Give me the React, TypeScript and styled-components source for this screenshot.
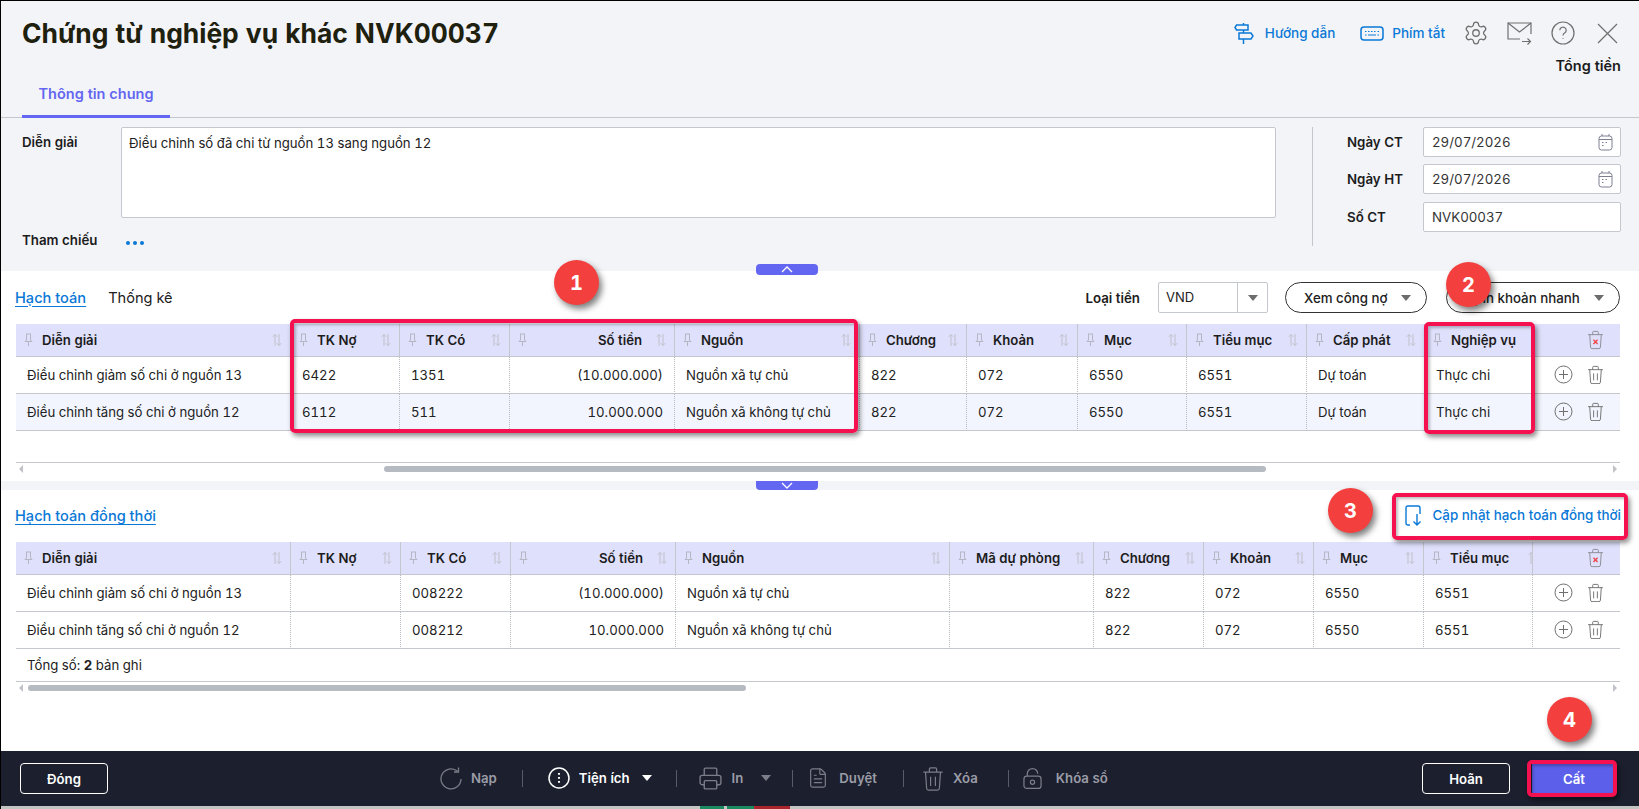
import * as React from 'react'
import styled, { createGlobalStyle } from 'styled-components'
import { Settings, Printer, FileText } from 'lucide-react'

const GlobalStyle = createGlobalStyle`
  html, body {
    margin: 0;
    padding: 0;
    width: 1639px;
    height: 809px;
    overflow: hidden;
    background: #fff;
    font-family: Inter, "Noto Sans", "Liberation Sans", sans-serif;
    font-size: 13px;
    font-variant-numeric: tabular-nums;
    color: #212121;
  }
  * { box-sizing: border-box; }
`

const BLUE = '#0a78d6'
const LINE = '#c5c7cf'

const Page = styled.div`
  position: relative;
  width: 1639px;
  height: 809px;
  overflow: hidden;
`

const Frame = styled.div`
  display: flex;
  flex-direction: column;
  height: 100%;
  border-top: 1px solid #000;
  border-left: 1px solid #000;
`

const Header = styled.header`
  height: 270px;
  flex: none;
  background: #f3f4f8;
`

const HeadTop = styled.div`
  display: flex;
  justify-content: space-between;
  height: 117px;
  padding: 0 18px 0 21px;
  border-bottom: 1px solid ${LINE};
`

const HeadLeft = styled.div`
  display: flex;
  flex-direction: column;
  justify-content: space-between;
`

const Title = styled.h1`
  margin: 14px 0 0;
  font-size: 26.4px;
  line-height: 36px;
  font-weight: 700;
  color: #20200f;
`

const Tab = styled.div`
  width: 148px;
  height: 47px;
  margin-bottom: -1px;
  padding-top: 13px;
  text-align: center;
  font-size: 14.5px;
  line-height: 20px;
  font-weight: 600;
  color: #6366f1;
  border-bottom: 3px solid #6366f1;
`

const HeadRight = styled.div`
  display: flex;
  flex-direction: column;
  align-items: flex-end;
`

const Tools = styled.div`
  display: flex;
  align-items: center;
  height: 40px;
  margin-top: 12px;
`

const ToolLink = styled.a<{ $gap: number; $after: number }>`
  display: flex;
  align-items: center;
  gap: ${p => p.$gap}px;
  margin-right: ${p => p.$after}px;
  color: ${BLUE};
  font-size: 13.5px;
  font-weight: 500;
`

const ToolIcon = styled.span<{ $after: number }>`
  display: flex;
  margin-right: ${p => p.$after}px;
  color: #6f6f6f;
`

const TotalLabel = styled.div`
  margin-top: 3px;
  font-size: 14.5px;
  line-height: 20px;
  font-weight: 600;
  color: #1c1c1c;
`

const FormArea = styled.div`
  display: flex;
  padding: 9px 18px 0 21px;
`

const FormLeft = styled.div`
  width: 1254px;
`

const FormRow = styled.div<{ $top?: number }>`
  display: flex;
  align-items: flex-start;
  margin-top: ${p => p.$top ?? 0}px;
`

const FieldLabel = styled.label<{ $width: number }>`
  flex: none;
  width: ${p => p.$width}px;
  font-size: 13.3px;
  line-height: 30px;
  font-weight: 600;
  color: #1c1c1c;
`

const TextBox = styled.div`
  flex: 1;
  height: 91px;
  padding: 5px 7px;
  background: #fff;
  border: 1px solid ${LINE};
  border-radius: 2px;
  font-size: 13.2px;
  line-height: 20px;
`

const Dots = styled.span`
  display: flex;
  gap: 3px;
  margin: 16px 0 0 5px;
`

const Dot = styled.i`
  width: 4px;
  height: 4px;
  border-radius: 50%;
  background: ${BLUE};
`

const VDivider = styled.div`
  width: 1px;
  height: 119px;
  margin: 0 34px 0 36px;
  background: ${LINE};
`

const FormRight = styled.div`
  display: flex;
  flex-direction: column;
  gap: 7px;
`

const InputBox = styled.div`
  display: flex;
  align-items: center;
  justify-content: space-between;
  width: 198px;
  height: 30px;
  padding: 0 7px 0 8px;
  background: #fff;
  border: 1px solid ${LINE};
  border-radius: 2px;
  font-size: 13.3px;
  color: #333;
`

const Section = styled.section<{ $height: number }>`
  position: relative;
  flex: none;
  height: ${p => p.$height}px;
  padding: 0 19px 0 15px;
`

const Toolbar = styled.div<{ $height: number }>`
  display: flex;
  align-items: center;
  justify-content: space-between;
  height: ${p => p.$height}px;
  margin-left: -1px;
`

const SubTabs = styled.div`
  display: flex;
  gap: 22px;
`

const SubTab = styled.a<{ $active?: boolean }>`
  font-size: 14.6px;
  font-weight: ${p => (p.$active ? 500 : 400)};
  color: ${p => (p.$active ? BLUE : '#212121')};
  text-decoration: ${p => (p.$active ? 'underline' : 'none')};
  text-underline-offset: 3px;
`

const ToolbarRight = styled.div`
  display: flex;
  align-items: center;
`

const SelectLabel = styled.span`
  margin-right: 18px;
  font-size: 13.3px;
  font-weight: 600;
  color: #1c1c1c;
`

const SelectBox = styled.div`
  display: flex;
  width: 110px;
  height: 31px;
  margin-right: 17px;
  border: 1px solid ${LINE};
  border-radius: 2px;
  line-height: 29px;
`

const SelectValue = styled.span`
  flex: 1;
  padding-left: 7px;
`

const SelectArrow = styled.span`
  display: flex;
  align-items: center;
  justify-content: center;
  width: 30px;
  border-left: 1px solid ${LINE};
`

const Caret = styled.i<{ $color?: string; $left?: number }>`
  display: block;
  width: 0;
  height: 0;
  margin-left: ${p => p.$left ?? 0}px;
  border-left: 5px solid transparent;
  border-right: 5px solid transparent;
  border-top: 6px solid ${p => p.$color ?? '#6c6c6c'};
`

const Pill = styled.button<{ $width: number; $after?: number }>`
  display: flex;
  align-items: center;
  justify-content: space-between;
  width: ${p => p.$width}px;
  height: 31px;
  margin-right: ${p => p.$after ?? 0}px;
  padding: 0 15px 0 18px;
  background: #fff;
  border: 1px solid #333;
  border-radius: 16px;
  font: 500 13.3px Inter, sans-serif;
  color: #212121;
`

const GridTable = styled.table`
  width: 1604px;
  table-layout: fixed;
  border-collapse: separate;
  border-spacing: 0;
`

const HeadCell = styled.th`
  height: 33px;
  padding: 0;
  background: #dfe0fb;
  border-bottom: 1px solid ${LINE};
  border-right: 1px solid ${LINE};
  font-size: 13.2px;
  font-weight: 600;
  color: #1c1c1c;
  overflow: hidden;
  &:last-child { border-right: 0; }
`

const HeadInner = styled.div<{ $right?: boolean; $tight?: boolean }>`
  display: flex;
  align-items: center;
  padding: 0 ${p => (p.$tight ? 0 : 8)}px 0 8px;
  text-align: ${p => (p.$right ? 'right' : 'left')};
`

const HeadText = styled.span<{ $right?: boolean }>`
  flex: 1;
  margin: 0 ${p => (p.$right ? 14 : 0)}px 0 9px;
  white-space: nowrap;
`

const BodyRow = styled.tr<{ $alt?: boolean }>`
  background: ${p => (p.$alt ? '#f2f5fe' : '#fff')};
`

const BodyCell = styled.td<{ $right?: boolean; $rowHeight: number }>`
  height: ${p => p.$rowHeight}px;
  padding: 0 11px 1px;
  border-bottom: 1px solid ${LINE};
  border-right: 1px dotted #b8bac2;
  font-size: 13.2px;
  text-align: ${p => (p.$right ? 'right' : 'left')};
  white-space: nowrap;
  &:last-child { border-right: 0; }
`

const ActionGroup = styled.div`
  display: flex;
  align-items: center;
  justify-content: flex-end;
  gap: 14px;
  color: #6f6f6f;
  margin-right: 5px;
`

const HeadAction = styled.div`
  display: flex;
  justify-content: flex-end;
  padding-right: 16px;
`

const TableSlot = styled.div<{ $height: number }>`
  height: ${p => p.$height}px;
`

const ScrollTrack = styled.div`
  display: flex;
  align-items: center;
  width: 1604px;
  height: 11px;
  border-top: 1px solid ${LINE};
  padding: 2px 3px 0;
`

const Thumb = styled.div<{ $left: number; $width: number }>`
  width: ${p => p.$width}px;
  height: 6px;
  margin-left: ${p => p.$left}px;
  background: #b6bac1;
  border-radius: 3px;
`

const ArrowLeft = styled.i`
  width: 0;
  height: 0;
  border-top: 4px solid transparent;
  border-bottom: 4px solid transparent;
  border-right: 4px solid #c0c2c8;
`

const ArrowRight = styled.i`
  width: 0;
  height: 0;
  margin-left: auto;
  border-top: 4px solid transparent;
  border-bottom: 4px solid transparent;
  border-left: 4px solid #c0c2c8;
`

const Splitter = styled.div`
  flex: none;
  height: 9px;
  background: #f3f4f8;
`

const SplitHandle = styled.span<{ $top: number; $up?: boolean }>`
  position: absolute;
  left: 756px;
  top: ${p => p.$top}px;
  display: flex;
  align-items: center;
  justify-content: center;
  width: 62px;
  height: ${p => (p.$up ? 11 : 9)}px;
  background: #6366f1;
  border-radius: ${p => (p.$up ? '4px' : '0 0 4px 4px')};
  color: #fff;
`

const RowCount = styled.div`
  height: 32px;
  padding-left: 11px;
  line-height: 32px;
  font-size: 13.2px;
`

const UpdateLink = styled.a`
  display: flex;
  align-items: center;
  gap: 11px;
  margin: -2px -1px 0 0;
  color: ${BLUE};
  font-size: 13.4px;
  font-weight: 500;
`

const Spacer = styled.div`
  flex: 1;
`

const ActionBar = styled.footer`
  flex: none;
  display: flex;
  align-items: center;
  height: 55px;
  padding: 0 23px 0 19px;
  background: #1c1f2e;
`

const OutlineButton = styled.button<{ $width: number; $after?: number }>`
  width: ${p => p.$width}px;
  height: 31px;
  margin-right: ${p => p.$after ?? 0}px;
  background: transparent;
  border: 1px solid #fff;
  border-radius: 4px;
  font: 600 13.2px Inter, sans-serif;
  color: #fff;
`

const PrimaryButton = styled.button`
  width: 84px;
  height: 31px;
  background: #5b5fe9;
  border: 0;
  border-radius: 2px;
  font: 600 13.2px Inter, sans-serif;
  color: #fff;
`

const BarCenter = styled.div`
  display: flex;
  align-items: center;
  margin-left: 332px;
  margin-right: auto;
`

const BarItem = styled.span<{ $on?: boolean; $gap?: number }>`
  display: flex;
  align-items: center;
  gap: ${p => p.$gap ?? 9}px;
  font-size: 13.2px;
  font-weight: 600;
  color: ${p => (p.$on ? '#fff' : '#9a9ca6')};
`

const BarSep = styled.i<{ $left: number; $right: number }>`
  width: 1px;
  height: 17px;
  margin: 0 ${p => p.$right}px 0 ${p => p.$left}px;
  background: #585b68;
`

const TaskStrip = styled.div`
  flex: none;
  display: flex;
  height: 3px;
  background: #c4c4c4;
  padding-left: 699px;
`

const TaskMark = styled.i<{ $color: string; $width: number; $after?: number }>`
  width: ${p => p.$width}px;
  margin-right: ${p => p.$after ?? 0}px;
  background: ${p => p.$color};
`

const RedBox = styled.div<{ $x: number; $y: number; $w: number; $h: number }>`
  position: absolute;
  left: ${p => p.$x}px;
  top: ${p => p.$y}px;
  width: ${p => p.$w}px;
  height: ${p => p.$h}px;
  border: 4px solid #f5104f;
  border-radius: 5px;
  box-shadow: 2px 3px 5px rgba(0, 0, 0, 0.45), inset 2px 2px 3px rgba(0, 0, 0, 0.25);
  pointer-events: none;
`

const Badge = styled.div<{ $x: number; $y: number }>`
  position: absolute;
  left: ${p => p.$x}px;
  top: ${p => p.$y}px;
  display: flex;
  align-items: center;
  justify-content: center;
  width: 45px;
  height: 45px;
  border-radius: 50%;
  background: #f43f3f;
  box-shadow: 3px 4px 6px rgba(0, 0, 0, 0.5);
  font-size: 20px;
  font-weight: 700;
  color: #fff;
`

const PinIcon = () => (
  <svg width="9" height="14" viewBox="0 0 9 14" fill="none" stroke="#b4b6c4" strokeWidth="1">
    <path d="M2 1h5M2.5 1v6L1 8.5h7L6.5 7V1M4.5 8.5V13" />
  </svg>
)

const SortIcon = ({ off }: { off?: boolean }) => (
  <svg width="10" height="14" viewBox="0 0 10 14" fill="none" stroke="#bfc1cb" strokeWidth="1" style={off ? { marginRight: -6 } : undefined}>
    <path d="M3 13V1.5M.8 3.8 3 1.5l2.2 2.3M7 1v11.5M4.8 10.2 7 12.5l2.2-2.3" />
  </svg>
)

const CalendarIcon = () => (
  <svg width="15" height="18" viewBox="0 0 15 18" fill="none" stroke="#7c7f90" strokeWidth="1">
    <rect x="1" y="3" width="13" height="14" rx="2.5" />
    <path d="M1 6.5h13M4 1v2M11 1v2" />
    <path d="M4 9.5h1.5M7.5 9.5H9M4 12.5h1.5" />
  </svg>
)

const PlusIcon = () => (
  <svg width="19" height="19" viewBox="0 0 19 19" fill="none" stroke="#6f6f6f" strokeWidth="1">
    <circle cx="9.5" cy="9.5" r="8.5" />
    <path d="M9.5 5v9M5 9.5h9" />
  </svg>
)

const TrashIcon = ({ mark, size = 18, color = '#6f6f6f' }: { mark?: boolean; size?: number; color?: string }) => (
  <svg width={size} height={size * 1.15} viewBox="0 0 18 21" fill="none" stroke={color} strokeWidth="1">
    <path d="M1 5h16M6 5V2.5Q6 1.500 7 1.500h4q1 0 1 1V5M2.800 5l.9 13.500q.1 1.500 1.600 1.500h7.400q1.500 0 1.600-1.500L15.200 5" />
    {mark ? <path d="M6.800 10.500l4.400 4.500M11.200 10.500l-4.400 4.500" stroke="#ef4444" strokeWidth="1.400" /> : <path d="M7 9v7.500M11 9v7.500" />}
  </svg>
)

const SignpostIcon = () => (
  <svg width="20" height="23" viewBox="0 0 20 23" fill="none" stroke={BLUE} strokeWidth="1.500">
    <path d="M9.500 1v2M9.500 8v3M9.500 17v5" />
    <path d="M2.500 3H14v5H2.500L1 5.500z" />
    <path d="M5 11h12l2 3-2 3H5z" />
  </svg>
)

const KeyboardIcon = () => (
  <svg width="24" height="15" viewBox="0 0 24 15" fill="none" stroke={BLUE} strokeWidth="1.500">
    <rect x="1" y="1" width="22" height="13" rx="3" />
    <path d="M5 5.500h1.500M8 5.500h1.500M11 5.500h1.500M14 5.500h1.500M17.500 5.500H19M5 9h1.500M8 9h8M17.500 9H19" strokeWidth="1.200" />
  </svg>
)

const MailIcon = () => (
  <svg width="25" height="23" viewBox="0 0 25 23" fill="none" stroke="#6f6f6f" strokeWidth="1.200">
    <path d="M13 17H1V1h23v11" />
    <path d="M1 1l11.500 9L24 1" />
    <path d="M15 19.500h8.500M20.500 16.500l3 3-3 3" />
  </svg>
)

const HelpIcon = () => (
  <svg width="24" height="24" viewBox="0 0 24 24" fill="none" stroke="#6f6f6f" strokeWidth="1.200">
    <circle cx="12" cy="12" r="11" />
    <path d="M8.800 9.300a3.200 3.200 0 1 1 4.800 2.800c-1 .6-1.600 1.200-1.600 2.400" />
    <path d="M12 17.200v.8" />
  </svg>
)

const CloseIcon = () => (
  <svg width="21" height="21" viewBox="0 0 21 21" fill="none" stroke="#6f6f6f" strokeWidth="1.200">
    <path d="M1 1l19 19M20 1 1 20" />
  </svg>
)

const UpdateIcon = () => (
  <svg width="17" height="21" viewBox="0 0 17 21" fill="none" stroke={BLUE} strokeWidth="1.400">
    <path d="M5 20H3q-2 0-2-2V3q0-2 2-2h10q2 0 2 2v6" />
    <path d="M12 9v11M8.500 16.500 12 20l3.500-3.500" />
  </svg>
)

const ReloadIcon = () => (
  <svg width="22" height="23" viewBox="0 0 22 23" fill="none" stroke="#7b7d88" strokeWidth="1.300">
    <path d="M17.500 4.300A10 10 0 1 0 21 12" />
    <path d="M18.500 .5v4.500H14" />
  </svg>
)

const MoreIcon = () => (
  <svg width="22" height="22" viewBox="0 0 22 22" fill="none" stroke="#fff" strokeWidth="1.500">
    <circle cx="11" cy="11" r="10" />
    <path d="M11 6v1.800M11 10v1.800M11 14v1.800" strokeWidth="2" />
  </svg>
)

const LockIcon = () => (
  <svg width="19" height="23" viewBox="0 0 20 23" fill="none" stroke="#7b7d88" strokeWidth="1.300">
    <path d="M4.500 9V6.500a5.500 5.500 0 0 1 11 0" />
    <rect x="1" y="9" width="18" height="13" rx="3" />
    <circle cx="10" cy="15.500" r="2.200" />
  </svg>
)

const Chevron = ({ up }: { up?: boolean }) => (
  <svg width="12" height="7" viewBox="0 0 12 7" fill="none" stroke="#fff" strokeWidth="1.300">
    <path d={up ? 'M1 6l5-5 5 5' : 'M1 1l5 5 5-5'} />
  </svg>
)

type Column = { label: string; width: number; right?: boolean; noSort?: boolean; sortOff?: boolean }

const mainColumns: Column[] = [
  { label: 'Diễn giải', width: 275 },
  { label: 'TK Nợ', width: 109 },
  { label: 'TK Có', width: 110 },
  { label: 'Số tiền', width: 165, right: true },
  { label: 'Nguồn', width: 185 },
  { label: 'Chương', width: 107 },
  { label: 'Khoản', width: 111 },
  { label: 'Mục', width: 109 },
  { label: 'Tiểu mục', width: 120 },
  { label: 'Cấp phát', width: 118 },
  { label: 'Nghiệp vụ', width: 108, noSort: true },
]

const mainRows = [
  ['Điều chỉnh giảm số chi ở nguồn 13', '6422', '1351', '(10.000.000)', 'Nguồn xã tự chủ', '822', '072', '6550', '6551', 'Dự toán', 'Thực chi'],
  ['Điều chỉnh tăng số chi ở nguồn 12', '6112', '511', '10.000.000', 'Nguồn xã không tự chủ', '822', '072', '6550', '6551', 'Dự toán', 'Thực chi'],
]

const syncColumns: Column[] = [
  { label: 'Diễn giải', width: 275 },
  { label: 'TK Nợ', width: 110 },
  { label: 'TK Có', width: 110 },
  { label: 'Số tiền', width: 165, right: true },
  { label: 'Nguồn', width: 274 },
  { label: 'Mã dự phòng', width: 144 },
  { label: 'Chương', width: 110 },
  { label: 'Khoản', width: 110 },
  { label: 'Mục', width: 110 },
  { label: 'Tiểu mục', width: 109, sortOff: true },
]

const syncRows = [
  ['Điều chỉnh giảm số chi ở nguồn 13', '', '008222', '(10.000.000)', 'Nguồn xã tự chủ', '', '822', '072', '6550', '6551'],
  ['Điều chỉnh tăng số chi ở nguồn 12', '', '008212', '10.000.000', 'Nguồn xã không tự chủ', '', '822', '072', '6550', '6551'],
]

const DataTable = ({ columns, rows, stripe, rowHeight }: { columns: Column[]; rows: string[][]; stripe?: boolean; rowHeight: number }) => (
  <GridTable>
    <colgroup>
      {columns.map(c => <col key={c.label} width={c.width} />)}
      <col width={87} />
    </colgroup>
    <thead>
      <tr>
        {columns.map(c => (
          <HeadCell key={c.label}>
            <HeadInner $right={c.right} $tight={c.sortOff}>
              <PinIcon />
              <HeadText $right={c.right}>{c.label}</HeadText>
              {!c.noSort && <SortIcon off={c.sortOff} />}
            </HeadInner>
          </HeadCell>
        ))}
        <HeadCell>
          <HeadAction><TrashIcon mark size={17} color="#8a8a95" /></HeadAction>
        </HeadCell>
      </tr>
    </thead>
    <tbody>
      {rows.map((row, i) => (
        <BodyRow key={i} $alt={stripe && i === 1}>
          {row.map((value, j) => (
            <BodyCell key={j} $rowHeight={rowHeight} $right={columns[j].right}>{value}</BodyCell>
          ))}
          <BodyCell $rowHeight={rowHeight}>
            <ActionGroup><PlusIcon /><TrashIcon size={17} /></ActionGroup>
          </BodyCell>
        </BodyRow>
      ))}
    </tbody>
  </GridTable>
)

export default function App() {
  return (
    <Page>
      <GlobalStyle />
      <Frame>
        <Header>
          <HeadTop>
            <HeadLeft>
              <Title>Chứng từ nghiệp vụ khác NVK00037</Title>
              <Tab>Thông tin chung</Tab>
            </HeadLeft>
            <HeadRight>
              <Tools>
                <ToolLink $gap={11} $after={25}><SignpostIcon />Hướng dẫn</ToolLink>
                <ToolLink $gap={8} $after={18}><KeyboardIcon />Phím tắt</ToolLink>
                <ToolIcon $after={18}><Settings size={26} strokeWidth={1.2} /></ToolIcon>
                <ToolIcon $after={19}><MailIcon /></ToolIcon>
                <ToolIcon $after={22}><HelpIcon /></ToolIcon>
                <ToolIcon $after={3}><CloseIcon /></ToolIcon>
              </Tools>
              <TotalLabel>Tổng tiền</TotalLabel>
            </HeadRight>
          </HeadTop>
          <FormArea>
            <FormLeft>
              <FormRow>
                <FieldLabel $width={99}>Diễn giải</FieldLabel>
                <TextBox>Điều chỉnh số đã chi từ nguồn 13 sang nguồn 12</TextBox>
              </FormRow>
              <FormRow $top={7}>
                <FieldLabel $width={99}>Tham chiếu</FieldLabel>
                <Dots><Dot /><Dot /><Dot /></Dots>
              </FormRow>
            </FormLeft>
            <VDivider />
            <FormRight>
              <FormRow>
                <FieldLabel $width={76}>Ngày CT</FieldLabel>
                <InputBox>29/07/2026<CalendarIcon /></InputBox>
              </FormRow>
              <FormRow>
                <FieldLabel $width={76}>Ngày HT</FieldLabel>
                <InputBox>29/07/2026<CalendarIcon /></InputBox>
              </FormRow>
              <FormRow $top={1}>
                <FieldLabel $width={76}>Số CT</FieldLabel>
                <InputBox>NVK00037</InputBox>
              </FormRow>
            </FormRight>
          </FormArea>
        </Header>

        <Section $height={210}>
          <Toolbar $height={53}>
            <SubTabs>
              <SubTab $active>Hạch toán</SubTab>
              <SubTab>Thống kê</SubTab>
            </SubTabs>
            <ToolbarRight>
              <SelectLabel>Loại tiền</SelectLabel>
              <SelectBox>
                <SelectValue>VND</SelectValue>
                <SelectArrow><Caret /></SelectArrow>
              </SelectBox>
              <Pill $width={142} $after={19}>Xem công nợ<Caret /></Pill>
              <Pill $width={174}>Định khoản nhanh<Caret /></Pill>
            </ToolbarRight>
          </Toolbar>
          <TableSlot $height={138}>
            <DataTable columns={mainColumns} rows={mainRows} rowHeight={37} stripe />
          </TableSlot>
          <ScrollTrack>
            <ArrowLeft />
            <Thumb $left={361} $width={882} />
            <ArrowRight />
          </ScrollTrack>
        </Section>
        <Splitter />

        <Section $height={200}>
          <Toolbar $height={52}>
            <SubTab $active>Hạch toán đồng thời</SubTab>
            <UpdateLink><UpdateIcon />Cập nhật hạch toán đồng thời</UpdateLink>
          </Toolbar>
          <DataTable columns={syncColumns} rows={syncRows} rowHeight={37} />
          <RowCount>Tổng số: <b>2</b> bản ghi</RowCount>
          <ScrollTrack>
            <ArrowLeft />
            <Thumb $left={5} $width={718} />
            <ArrowRight />
          </ScrollTrack>
        </Section>
        <Spacer />

        <ActionBar>
          <OutlineButton $width={88}>Đóng</OutlineButton>
          <BarCenter>
            <BarItem><ReloadIcon />Nạp</BarItem>
            <BarSep $left={25} $right={25} />
            <BarItem $on><MoreIcon />Tiện ích<Caret $color="#fff" $left={3} /></BarItem>
            <BarSep $left={24} $right={21} />
            <BarItem><Printer size={25} strokeWidth={1.3} color="#7b7d88" />In<Caret $color="#7b7d88" $left={9} /></BarItem>
            <BarSep $left={21} $right={14} />
            <BarItem $gap={10}><FileText size={22} strokeWidth={1.3} color="#7b7d88" />Duyệt</BarItem>
            <BarSep $left={26} $right={18} />
            <BarItem $gap={9}><TrashIcon size={22} color="#7b7d88" />Xóa</BarItem>
            <BarSep $left={30} $right={14} />
            <BarItem $gap={14}><LockIcon />Khóa sổ</BarItem>
          </BarCenter>
          <OutlineButton $width={88} $after={22}>Hoãn</OutlineButton>
          <PrimaryButton>Cất</PrimaryButton>
        </ActionBar>
        <TaskStrip>
          <TaskMark $color="#1c8a60" $width={24} $after={3} />
          <TaskMark $color="#1c8a60" $width={27} />
          <TaskMark $color="#a8262b" $width={36} />
        </TaskStrip>
      </Frame>

      <SplitHandle $top={264} $up><Chevron up /></SplitHandle>
      <SplitHandle $top={481}><Chevron /></SplitHandle>

      <RedBox $x={290} $y={319} $w={568} $h={114} />
      <RedBox $x={1424} $y={322} $w={111} $h={112} />
      <RedBox $x={1392} $y={493} $w={236} $h={47} />
      <RedBox $x={1527} $y={760} $w={90} $h={37} />

      <Badge $x={554} $y={260}>1</Badge>
      <Badge $x={1446} $y={262}>2</Badge>
      <Badge $x={1328} $y={488}>3</Badge>
      <Badge $x={1547} $y={697}>4</Badge>
    </Page>
  )
}
